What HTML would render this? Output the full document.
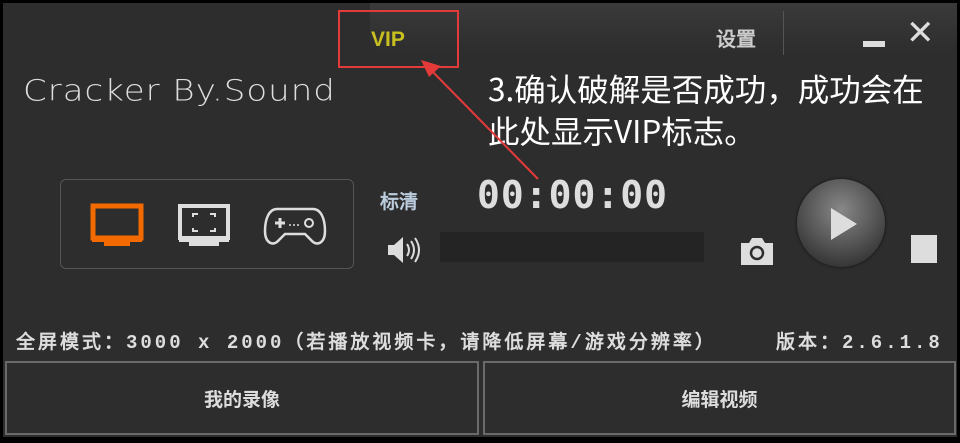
<!DOCTYPE html>
<html><head><meta charset="utf-8"><style>
body{margin:0;width:960px;height:440px;background:#000;overflow:hidden;font-family:"Liberation Sans","Noto Sans CJK SC",sans-serif}
#w{position:absolute;left:3px;top:3px;width:954px;height:434px;background:#2d2d2d}
.a{position:absolute}
.btn{position:absolute;top:358px;height:70px;border:2px solid #6a6a6a;background:#2d2d2d;color:#ddd;font-weight:bold;font-size:19px;display:flex;align-items:center;justify-content:center;font-family:"WenQuanYi Zen Hei","Noto Sans CJK SC",sans-serif}
.ft{color:#ddd;font-size:19px;font-family:"Liberation Mono","WenQuanYi Zen Hei",monospace;letter-spacing:3px;white-space:nowrap;font-weight:bold}
</style></head><body>
<div id="w">
<div class="a" style="left:367px;top:0;width:587px;height:50px;background:linear-gradient(#3a3a3a,#2d2d2d)"></div>
<div class="a" style="left:780px;top:8px;width:1px;height:44px;background:#555"></div>
<div class="a" style="left:368px;top:25px;color:#c8c020;font-weight:bold;font-size:21px">VIP</div>
<div class="a" style="left:335px;top:7px;width:121px;height:58px;border:2px solid #e53a3a;box-sizing:border-box"></div>
<div class="a" style="left:713px;top:20px;color:#ccc;font-weight:bold;font-size:20px;font-family:'WenQuanYi Zen Hei',sans-serif">设置</div>
<div class="a" style="left:860px;top:38px;width:22px;height:6px;background:#ddd"></div>
<div class="a" style="left:903px;top:13px;color:#ddd;font-size:34px;line-height:34px">✕</div>
<div class="a" style="left:20px;top:68px;color:#ddd;font-size:34px;font-family:'DejaVu Sans',sans-serif;font-weight:200;letter-spacing:1px;transform:scaleY(0.85)">Cracker By.Sound</div>
<div class="a" style="left:485px;top:64px;color:#fff;font-size:31.5px;line-height:42px;font-family:'Noto Sans CJK SC',sans-serif;white-space:nowrap">3.确认破解是否成功，成功会在<br>此处显示VIP标志。</div>
<svg class="a" style="left:0;top:0" width="954" height="440"><line x1="535" y1="176" x2="425" y2="64" stroke="#e53a3a" stroke-width="2"/><polygon points="418,57 438,63 426,74" fill="#e53a3a"/></svg>
<div class="a" style="left:57px;top:176px;width:292px;height:88px;border:1px solid #555;border-radius:6px"></div>
<svg class="a" style="left:87px;top:200px" width="56" height="45"><rect x="3" y="3" width="48" height="32" fill="none" stroke="#f26a00" stroke-width="5"/><rect x="2" y="33" width="50" height="6" fill="#f26a00"/><rect x="14" y="39" width="26" height="4" fill="#f26a00"/></svg>
<svg class="a" style="left:174px;top:200px" width="56" height="45"><rect x="3" y="3" width="48" height="32" fill="none" stroke="#ddd" stroke-width="4"/><rect x="2" y="33" width="50" height="6" fill="#ddd"/><rect x="12" y="39" width="30" height="4" fill="#ddd"/><path d="M16 14v-3h5M33 11h5v3M38 25v3h-5M21 28h-5v-3" stroke="#ddd" stroke-width="2" fill="none"/></svg>
<svg class="a" style="left:260px;top:200px" width="64" height="46"><path d="M14 6h36c8 0 12 10 12 22c0 12-8 16-14 9l-6-6H22l-6 6c-6 7-14 3-14-9C2 16 6 6 14 6z" fill="none" stroke="#ddd" stroke-width="2.5"/><path d="M12 20h10M17 15v10" stroke="#ddd" stroke-width="3"/><circle cx="46" cy="20" r="4" fill="none" stroke="#ddd" stroke-width="2"/><circle cx="27" cy="22" r="1" fill="#ddd"/><circle cx="31" cy="22" r="1" fill="#ddd"/><circle cx="35" cy="22" r="1" fill="#ddd"/></svg>
<div class="a" style="left:377px;top:184px;color:#bcd;font-weight:bold;font-size:19px;font-family:'WenQuanYi Zen Hei',sans-serif">标清</div>
<div class="a" style="left:474px;top:170px;color:#ddd;font-size:38px;font-family:'DejaVu Sans Mono',monospace;letter-spacing:1px;font-weight:bold">00:00:00</div>
<svg class="a" style="left:382px;top:232px" width="36" height="30"><path d="M3 10h6l9-8v26l-9-8H3z" fill="#ddd"/><path d="M22 9q4 6 0 12M26 6q6 9 0 18M30 3q8 12 0 24" stroke="#ddd" stroke-width="2" fill="none"/></svg>
<div class="a" style="left:437px;top:229px;width:264px;height:30px;background:#242424"></div>
<svg class="a" style="left:736px;top:232px" width="36" height="32"><path d="M2 8h8l3-5h10l3 5h8v22H2z" fill="#ddd"/><circle cx="18" cy="18" r="6" fill="none" stroke="#2d2d2d" stroke-width="2.5"/></svg>
<div class="a" style="left:794px;top:176px;width:88px;height:88px;border-radius:50%;background:radial-gradient(circle at 50% 35%,#888,#3a3a3a 75%,#222);box-shadow:0 0 3px #111"></div>
<svg class="a" style="left:826px;top:204px" width="30" height="36"><polygon points="2,1 28,17 2,33" fill="#ddd"/></svg>
<div class="a" style="left:908px;top:232px;width:26px;height:28px;background:#ddd"></div>
<div class="a ft" style="left:13px;top:324px">全屏模式：3000 x 2000（若播放视频卡，请降低屏幕/游戏分辨率）</div>
<div class="a ft" style="left:773px;top:324px">版本：2.6.1.8</div>
<div class="btn" style="left:2px;width:470px">我的录像</div>
<div class="btn" style="left:480px;width:469px">编辑视频</div>
</div>
</body></html>
